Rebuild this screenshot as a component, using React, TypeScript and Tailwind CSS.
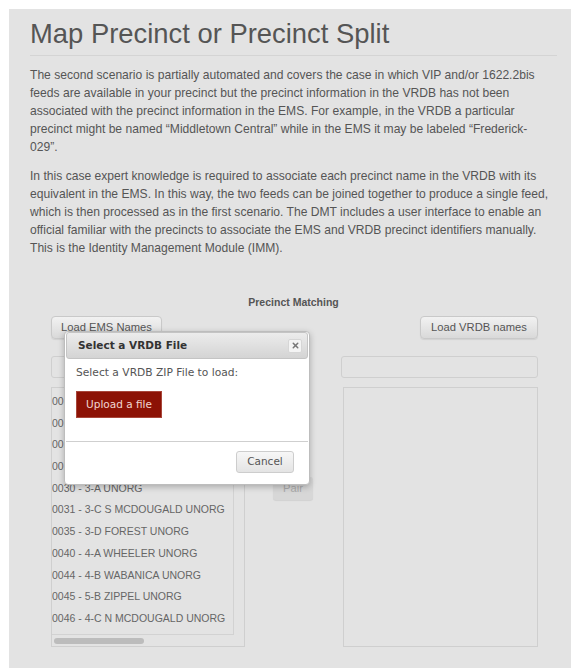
import { X } from "lucide-react";

const introLines = [
  "The second scenario is partially automated and covers the case in which VIP and/or 1622.2bis",
  "feeds are available in your precinct but the precinct information in the VRDB has not been",
  "associated with the precinct information in the EMS. For example, in the VRDB a particular",
  "precinct might be named \u201CMiddletown Central\u201D while in the EMS it may be labeled \u201CFrederick-",
  "029\u201D.",
];

const detailLines = [
  "In this case expert knowledge is required to associate each precinct name in the VRDB with its",
  "equivalent in the EMS. In this way, the two feeds can be joined together to produce a single feed,",
  "which is then processed as in the first scenario. The DMT includes a user interface to enable an",
  "official familiar with the precincts to associate the EMS and VRDB precinct identifiers manually.",
  "This is the Identity Management Module (IMM).",
];

const emsNames = [
  "0010 - 1-A FORT UNORG",
  "0015 - 1-B ALLEN UNORG",
  "0020 - 2-A MILLER UNORG",
  "0025 - 2-B BRADLEY UNORG",
  "0030 - 3-A UNORG",
  "0031 - 3-C S MCDOUGALD UNORG",
  "0035 - 3-D FOREST UNORG",
  "0040 - 4-A WHEELER UNORG",
  "0044 - 4-B WABANICA UNORG",
  "0045 - 5-B ZIPPEL UNORG",
  "0046 - 4-C N MCDOUGALD UNORG",
];

const sans = "font-['Helvetica_Neue','Liberation_Sans',Arial,sans-serif]";
const verdana = "font-['DejaVu_Sans',Verdana,sans-serif]";

function GrayButton({ children, className = "" }: { children: React.ReactNode; className?: string }) {
  return (
    <button
      className={`h-[23px] rounded-[4px] border border-[#c9c9c9] bg-gradient-to-b from-[#f2f2f2] to-[#d9d9d9] text-[11.2px] text-[#555] shadow-[0_1px_1px_rgba(0,0,0,0.08)] ${className}`}
    >
      {children}
    </button>
  );
}

function FileDialog() {
  return (
    <div className={`absolute left-[13px] top-[15px] w-[246px] h-[154px] rounded-[4px] border border-[#bdbdbd] bg-white shadow-[0_2px_6px_rgba(0,0,0,0.25)] ${verdana}`}>
      <div className="mx-[1px] flex h-[27px] items-center justify-between rounded-[3px] border border-[#c4c4c4] bg-gradient-to-b from-[#ececec] to-[#d4d4d4] pl-[11px] pr-[5px]">
        <span className="text-[10.5px] font-bold text-[#333]">Select a VRDB File</span>
        <span className="flex h-[14px] w-[14px] items-center justify-center rounded-[2px] border border-[#d6d6d6] bg-[#f4f4f4]">
          <X size={9} strokeWidth={4} className="text-[#777]" />
        </span>
      </div>
      <div className="mt-[7px] px-[11px] text-[10.7px] leading-[13px] text-[#555]">Select a VRDB ZIP File to load:</div>
      <button className="ml-[11px] mt-[12px] h-[27px] w-[86px] border border-[#a8463a] bg-[#8c1205] text-[10.5px] text-[#f1d6d2]">
        Upload a file
      </button>
      <div className="mx-[1px] mt-[23px] border-t border-[#cfcfcf]" />
      <div className="flex justify-end pr-[15px] pt-[9px]">
        <button className="h-[22px] w-[58px] rounded-[3px] border border-[#cdcdcd] bg-gradient-to-b from-[#f7f7f7] to-[#e4e4e4] text-[10.5px] text-[#555]">
          Cancel
        </button>
      </div>
    </div>
  );
}

export default function App() {
  return (
    <div className="min-h-[668px] bg-white pl-[9px] pt-[9px]">
      <div className={`min-h-[659px] bg-[#e3e3e3] pl-[21px] pr-[14px] pt-[9px] text-[#555] ${sans}`}>
        <h1 className="text-[27.4px] leading-[32px] text-[#555]">Map Precinct or Precinct Split</h1>
        <div className="mt-[5px] border-t border-[#d4d4d4]" />

        <p className="mt-[10px] text-[12.1px] leading-[18px]">
          {introLines.map((line) => (
            <span key={line} className="block whitespace-nowrap">{line}</span>
          ))}
        </p>
        <p className="mt-[11px] text-[12.1px] leading-[18px]">
          {detailLines.map((line) => (
            <span key={line} className="block whitespace-nowrap">{line}</span>
          ))}
        </p>

        {/* precinct matching tool */}
        <div className="mt-[39px] text-center text-[10.5px] font-bold leading-[12px] text-[#555]">Precinct Matching</div>
        <div className="relative ml-[21px] mt-[8px] flex w-[487px]">
          <div className="flex w-[194px] flex-col">
            <GrayButton className="w-[111px]">Load EMS Names</GrayButton>
            <div className="mt-[17px] h-[22px] rounded-[3px] border border-[#cfcfcf] bg-[#e3e3e3]" />
            <div className="mt-[9px] h-[260px] border border-[#cfcfcf]">
              <div className="h-[247px] w-[182px] overflow-hidden border-r border-b border-[#d2d2d2]">
                <div className="pt-[3px]">
                  {emsNames.map((name) => (
                    <div key={name} className="h-[21.7px] whitespace-nowrap text-[10.5px] leading-[21.7px] text-[#666]">
                      {name}
                    </div>
                  ))}
                </div>
              </div>
              <div className="ml-[2px] mt-[3px] h-[6px] w-[90px] rounded-full bg-[#bcbcbc]" />
            </div>
          </div>

          <div className="flex w-[96px] flex-col items-center pt-[161px]">
            <button className="h-[23px] w-[40px] rounded-[3px] bg-[#d7d7d7] text-[11.2px] text-[#ababab] shadow-[0_1px_1px_rgba(0,0,0,0.08)]">
              Pair
            </button>
          </div>

          <div className="flex w-[197px] flex-col">
            <GrayButton className="w-[118px] self-end">Load VRDB names</GrayButton>
            <div className="mt-[17px] h-[22px] rounded-[3px] border border-[#cfcfcf] bg-[#e3e3e3]" />
            <div className="ml-[2px] mt-[9px] h-[260px] border border-[#cfcfcf]" />
          </div>

          <FileDialog />
        </div>
      </div>
    </div>
  );
}
